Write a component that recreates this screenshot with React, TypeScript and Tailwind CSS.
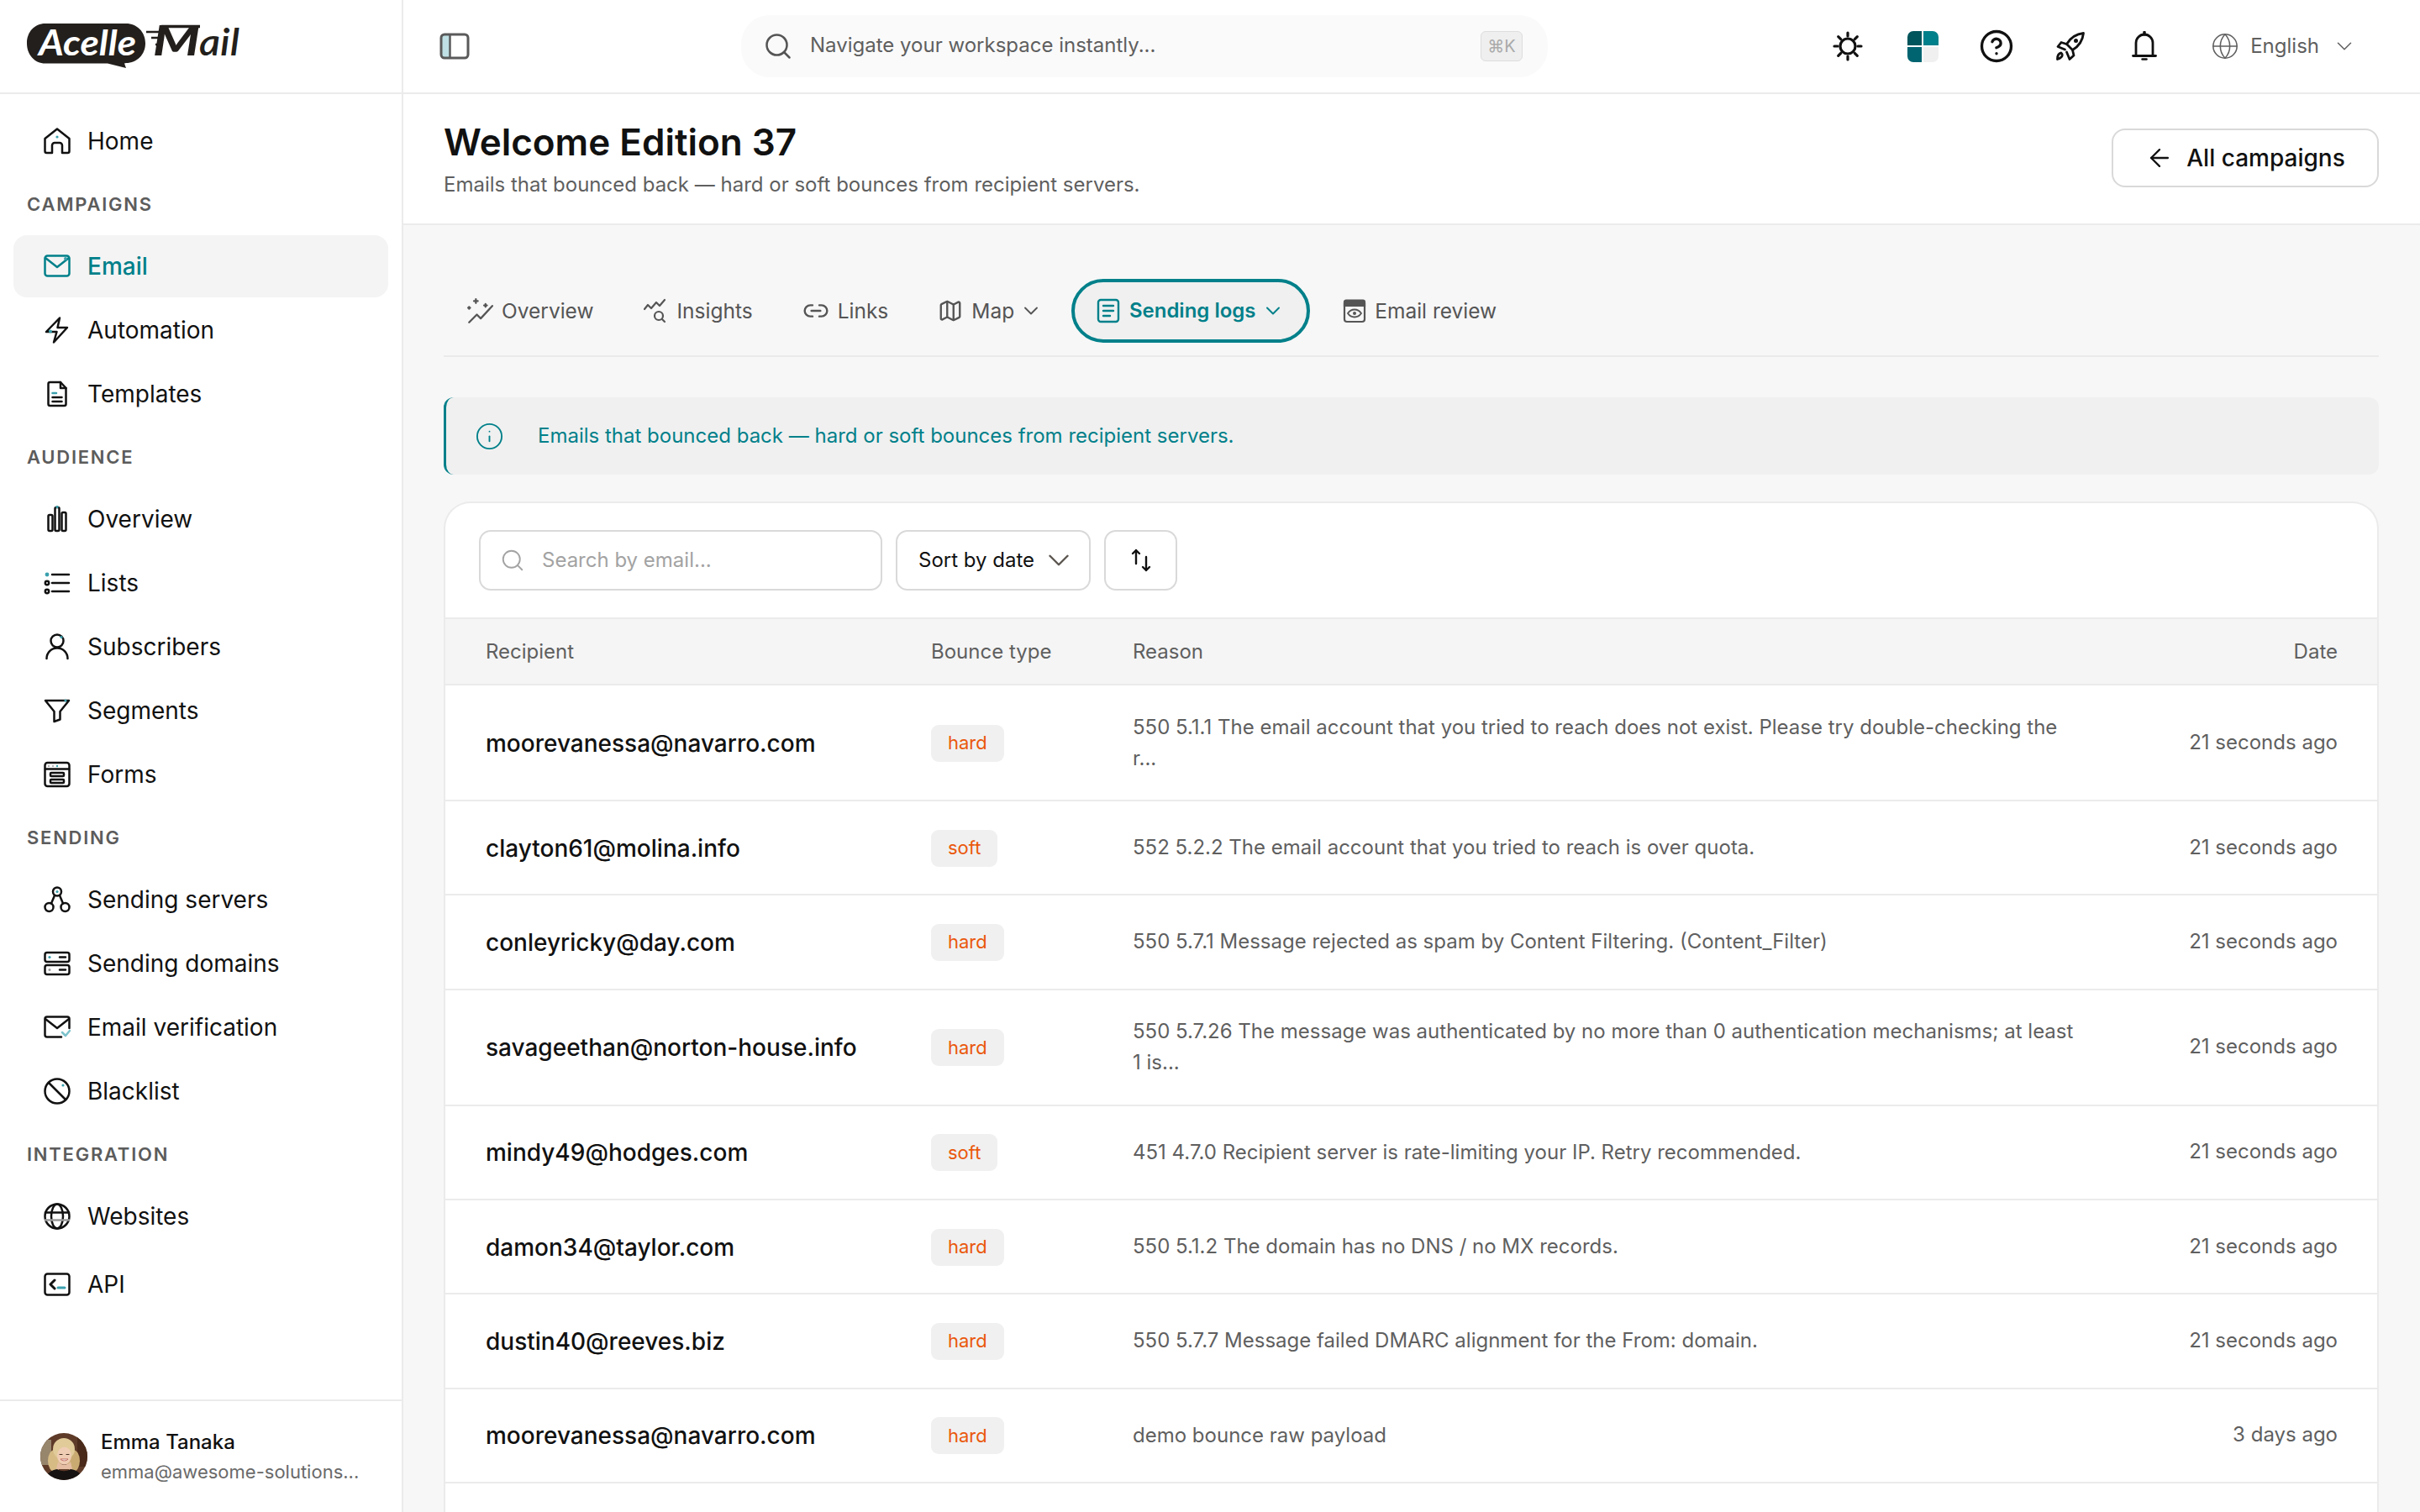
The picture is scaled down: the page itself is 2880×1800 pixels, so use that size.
import { ReactNode } from "react";
import { ArrowLeft, ChevronDown, CircleHelp, Globe, Info, Link2, Map as MapIcon, Search } from "lucide-react";

const TEAL = "#00808a";
const DOT = "#3aa0ad";

function Ico({ children, color = "#111111" }: { children: ReactNode; color?: string }) {
  return (
    <svg viewBox="0 0 32 32" fill="none" stroke={color} strokeWidth={2.5} strokeLinecap="round" strokeLinejoin="round" className="w-8 h-8 shrink-0">
      {children}
    </svg>
  );
}

const Dot = ({ x, y, r = 1.6 }: { x: number; y: number; r?: number }) => <circle cx={x} cy={y} r={r} fill={DOT} stroke="none" />;

const HomeIcon = () => (
  <Ico>
    <path d="M1.5 13 16 1.5 30.5 13v15a2 2 0 0 1-2 2H22V21a3 3 0 0 0-3-3h-6a3 3 0 0 0-3 3v9H3.5a2 2 0 0 1-2-2Z" />
    <Dot x={16} y={11} />
  </Ico>
);
const EmailIcon = () => (
  <Ico color={TEAL}>
    <rect x="1.5" y="3.5" width="29" height="24" rx="3" />
    <path d="M2 6l14 11L30 6" />
    <Dot x={26} y={7} r={2} />
  </Ico>
);
const BoltIcon = () => (
  <Ico>
    <path d="M19 1.500 3 18h12.500L12 30.500 28 13H16.500Z" />
    <Dot x={8} y={17.5} r={2} />
  </Ico>
);
const DocIcon = () => (
  <Ico>
    <path d="M7.500 2H20l6.500 7v19a2 2 0 0 1-2 2H7.500a2 2 0 0 1-2-2V4a2 2 0 0 1 2-2Z" />
    <path d="M20 2v7h6.500M10.500 20h11M10.500 25h11" />
    <path d="M10.500 15h4.500" stroke={DOT} />
  </Ico>
);
const BarsIcon = () => (
  <Ico>
    <rect x="5.5" y="11" width="5" height="19" rx="1.5" />
    <rect x="13.5" y="2" width="5" height="28" rx="1.5" />
    <rect x="21.5" y="8" width="5" height="22" rx="1.5" />
    <Dot x={16} y={1.5} />
  </Ico>
);
const ListIcon = () => (
  <Ico>
    <path d="M10 6h20M10 16h20M10 26h20" />
    <Dot x={4} y={6} r={2.4} />
    <circle cx="4" cy="16" r="2.2" />
    <circle cx="4" cy="26" r="2.2" />
  </Ico>
);
const UserIcon = () => (
  <Ico>
    <circle cx="16" cy="9" r="7.5" />
    <path d="M3.500 30c0-7 5.500-12.500 12.500-12.500S28.500 23 28.500 30" />
    <Dot x={21} y={4.5} />
  </Ico>
);
const FilterIcon = () => (
  <Ico>
    <path d="M2 4h28L19.500 17v9.500L12.500 29V17Z" />
    <Dot x={26} y={4} />
  </Ico>
);
const FormIcon = () => (
  <Ico>
    <rect x="1.5" y="2" width="29" height="28" rx="3" />
    <path d="M2 9.500h28" />
    <rect x="8" y="14" width="16" height="4" rx="1" />
    <rect x="8" y="22" width="16" height="4" rx="1" />
    <circle cx="6" cy="6" r="1" fill="#9a9a9a" stroke="none" />
    <circle cx="11" cy="6" r="1" fill="#9a9a9a" stroke="none" />
    <Dot x={16} y={6} r={1.2} />
  </Ico>
);
const ServersIcon = () => (
  <Ico>
    <circle cx="16" cy="6.5" r="5" />
    <circle cx="6.5" cy="25" r="5" />
    <circle cx="25.5" cy="25" r="5" />
    <path d="M13 11l-4 9.500M19 11l4 9.500" />
    <Dot x={16} y={6.5} />
  </Ico>
);
const DomainIcon = () => (
  <Ico>
    <rect x="1.5" y="3" width="29" height="11" rx="2.5" />
    <rect x="1.5" y="18" width="29" height="11" rx="2.5" />
    <path d="M19 8.500h7M19 23.500h7" />
    <Dot x={7} y={8.5} />
    <circle cx="7" cy="23.5" r="1.5" fill="#9a9a9a" stroke="none" />
  </Ico>
);
const VerifyIcon = () => (
  <Ico>
    <path d="M30.500 17V6a2.500 2.500 0 0 0-2.500-2.500H4A2.500 2.500 0 0 0 1.500 6v19A2.500 2.500 0 0 0 4 27.500h17" />
    <path d="M2 6l14 11L30 6" />
    <path d="M22 22l4 4 5-6" stroke="#7cc2cb" />
  </Ico>
);
const BanIcon = () => (
  <Ico>
    <circle cx="16" cy="16" r="14.5" />
    <path d="M6 6l20 20" />
    <Dot x={23} y={9} />
  </Ico>
);
const GlobeIcon = () => (
  <Ico>
    <circle cx="16" cy="16" r="14.5" />
    <ellipse cx="16" cy="16" rx="7" ry="14.5" />
    <path d="M2 11.500h28" />
    <path d="M2 20.500h28" stroke="#9a9a9a" />
  </Ico>
);
const ApiIcon = () => (
  <Ico>
    <rect x="1.5" y="3.5" width="29" height="25" rx="3" />
    <path d="M13 11l-5 5 5 5" strokeWidth={3} />
    <path d="M17 20h8" stroke={DOT} strokeWidth={3} />
  </Ico>
);

function NavItem({ icon, label, active, className = "" }: { icon: ReactNode; label: string; active?: boolean; className?: string }) {
  return (
    <a className={`flex items-center h-[74px] mb-[2px] rounded-[16px] pl-[36px] gap-[20px] text-[28px] ${active ? "bg-[#f4f4f4] text-[#00808a] font-medium" : "text-[#111111]"} ${className}`}>
      <span className="flex items-center justify-center w-8">{icon}</span>
      {label}
    </a>
  );
}

const NavLabel = ({ children }: { children: string }) => (
  <div className="h-[73px] flex items-center pl-[16px] text-[22px] font-semibold tracking-[0.08em] text-[#5c5c5c]">{children}</div>
);

function Logo() {
  return (
    <svg viewBox="0 -14 290 78" className="w-[290px] h-[78px]">
      <path d="M24 3h96c13 0 23 10 23 23.500S133 50 120 50l-2 .5 2 5.500-22-5.500H24C11 50.500 2 40 2 26.500S11 3 24 3Z" fill="#231f1c" />
      <text x="16" y="41" fontFamily="Lato, sans-serif" fontStyle="italic" fontWeight="700" fontSize="42" fill="#ffffff" textLength="116" lengthAdjust="spacingAndGlyphs">Acelle</text>
      <path d="M144 13h22M150 20h12M155 28h6" stroke="#231f1c" strokeWidth="2.5" />
      <text x="152" y="41" fontFamily="Lato, sans-serif" fontStyle="italic" fontWeight="900" fontSize="50" fill="#231f1c" textLength="56" lengthAdjust="spacingAndGlyphs">M</text>
      <path d="M162 6.500h46" stroke="#231f1c" strokeWidth="3.5" />
      <text x="207" y="41" fontFamily="Lato, sans-serif" fontStyle="italic" fontWeight="600" fontSize="44" fill="#231f1c" textLength="48" lengthAdjust="spacingAndGlyphs">ail</text>
    </svg>
  );
}

function Avatar() {
  return (
    <svg viewBox="0 0 56 56" className="w-[56px] h-[56px] rounded-full shrink-0">
      <rect width="56" height="56" fill="#5e3a28" />
      <rect x="0" y="8" width="13" height="30" fill="#97866c" />
      <rect x="44" y="0" width="12" height="40" fill="#4a2a1a" />
      <ellipse cx="17" cy="33" rx="8" ry="13" fill="#d6bb84" />
      <ellipse cx="39" cy="33" rx="8" ry="13" fill="#c9ab72" />
      <ellipse cx="28" cy="19" rx="13" ry="13" fill="#e0cb99" />
      <ellipse cx="28.5" cy="27" rx="8.5" ry="10.5" fill="#efcdb4" />
      <path d="M21 34c3 5 12 5 15 0l2 9H19Z" fill="#e5bda3" />
      <path d="M5 56c1-8 9-12 15-13 5 3 11 3 16 0 7 1 14 5 15 13Z" fill="#161211" />
      <path d="M24 31c2 2.500 7 2.500 9 0Z" fill="#ffffff" stroke="#b4574f" strokeWidth="0.8" />
      <path d="M23 25.500h3M31 25.500h3" stroke="#4a3426" strokeWidth="1.2" strokeLinecap="round" />
    </svg>
  );
}

function OverviewTabIcon() {
  return (
    <svg viewBox="1 2 27 27" fill="none" stroke="#555555" strokeWidth="2" strokeLinecap="round" strokeLinejoin="round" className="w-[31px] h-[31px]">
      <path d="M3 27l8-8 4 4 12-13" />
      <path d="M10 3v4M8 5h4M3 11v2M2 12h2M20 8v3M18.500 9.500h3" />
    </svg>
  );
}
function InsightsTabIcon() {
  return (
    <svg viewBox="0 0 30 30" fill="none" stroke="#555555" strokeWidth="2.2" strokeLinecap="round" strokeLinejoin="round" className="w-[30px] h-[30px]">
      <path d="M1 13l4-5 4 4 6-7 4 4 6-7" />
      <circle cx="18" cy="21" r="5" />
      <path d="M22 25l3 3" />
    </svg>
  );
}
function LogsTabIcon() {
  return (
    <svg viewBox="0 0 28 30" fill="none" stroke="#00808a" strokeWidth="2.4" strokeLinecap="round" className="w-[28px] h-[30px]">
      <rect x="2" y="2" width="24" height="26" rx="3" />
      <path d="M8 9h12M8 15h12M8 21h8" />
    </svg>
  );
}
function ReviewTabIcon() {
  return (
    <svg viewBox="0 0 28 30" fill="none" stroke="#555555" strokeWidth="2.2" className="w-[28px] h-[30px]">
      <rect x="2" y="3" width="24" height="25" rx="3" />
      <path d="M2 4.500a2 2 0 0 1 2-2h20a2 2 0 0 1 2 2V9H2Z" fill="#555555" />
      <path d="M6 18c4-6 12-6 16 0-4 6-12 6-16 0Z" strokeWidth="1.8" />
      <circle cx="14" cy="18" r="2" fill="#555555" stroke="none" />
    </svg>
  );
}

function PanelToggle() {
  return (
    <svg viewBox="0 0 36 32" className="w-[36px] h-[32px]" fill="none">
      <rect x="2" y="2" width="11" height="28" fill="#bfe0e4" />
      <rect x="2" y="2" width="32" height="28" rx="4" stroke="#5a5a5a" strokeWidth="3" />
      <path d="M12.500 2v28" stroke="#5a5a5a" strokeWidth="2.5" />
    </svg>
  );
}

function PaletteIcon() {
  return (
    <span className="grid grid-cols-2 gap-[2px] w-[37px] h-[37px] rounded-[7px] overflow-hidden">
      <span className="bg-[#00545b]" />
      <span className="bg-[#00808a]" />
      <span className="bg-[#006470]" />
      <span className="bg-[#f0f0f0]" />
    </span>
  );
}

function SunIcon() {
  return (
    <svg viewBox="0 0 36 36" fill="none" stroke="#111111" strokeWidth="3.2" strokeLinecap="round" className="w-[36px] h-[36px] -ml-[2px]">
      <circle cx="18" cy="18" r="9" />
      <path d="M18 2v4M18 30v4M2 18h4M30 18h4M6.700 6.700l3 3M26.300 26.300l3 3M6.700 29.300l3-3M26.300 9.700l3-3" />
    </svg>
  );
}

function RocketIcon() {
  return (
    <svg viewBox="0 0 36 36" fill="none" stroke="#111111" strokeWidth="2.8" strokeLinejoin="round" strokeLinecap="round" className="w-[36px] h-[36px]">
      <path d="M33.500 2.500c-9 1-15.500 5.500-20 13l7 7c7.500-4.500 12-11 13-20Z" />
      <path d="M13.500 15.500 7 13.500l-4 5 8.500 3.500" />
      <path d="M20.500 22.500 22 29l-5 4.500-3.500-8.500" />
      <path d="M2.500 33.500c0-4 1.500-7 4.500-7.500 2 1.500 1.500 4-.5 5.500-1 1-2.500 1.500-4 2Z" />
      <circle cx="24.500" cy="11.500" r="2.500" fill="#111111" stroke="none" />
    </svg>
  );
}

function BellIcon() {
  return (
    <svg viewBox="0 0 30 36" fill="none" stroke="#111111" strokeWidth="2.8" strokeLinecap="round" strokeLinejoin="round" className="w-[30px] h-[36px]">
      <path d="M5 29V14a10 10 0 0 1 20 0v15" />
      <path d="M1.500 29.500h27" />
      <path d="M15 1.500v2.500" strokeWidth="3.5" />
      <path d="M12.500 33.500h5" strokeWidth="2.5" />
    </svg>
  );
}

function SortIcon() {
  return (
    <svg viewBox="0 0 24 28" fill="none" stroke="#111111" strokeWidth="2.4" strokeLinecap="round" strokeLinejoin="round" className="w-[24px] h-[28px]">
      <path d="M6 18V2M2 6l4-4 4 4" />
      <path d="M18 10v16M14 22l4 4 4-4" />
    </svg>
  );
}

const TopIcon = ({ children }: { children: ReactNode }) => <span className="w-[88px] flex justify-center text-[#111111]">{children}</span>;

function Tab({ icon, label, chevron }: { icon: ReactNode; label: string; chevron?: boolean }) {
  return (
    <a className="flex items-center gap-[10px] text-[24.5px] text-[#555555]">
      {icon}
      {label}
      {chevron && <ChevronDown size={28} strokeWidth={1.6} className="-ml-[4px]" />}
    </a>
  );
}

type Bounce = { email: string; type: string; reason: ReactNode; date: string; tall?: boolean };

const rows: Bounce[] = [
  { email: "moorevanessa@navarro.com", type: "hard", reason: "550 5.1.1 The email account that you tried to reach does not exist. Please try double-checking the r...", date: "21 seconds ago", tall: true },
  { email: "clayton61@molina.info", type: "soft", reason: "552 5.2.2 The email account that you tried to reach is over quota.", date: "21 seconds ago" },
  { email: "conleyricky@day.com", type: "hard", reason: "550 5.7.1 Message rejected as spam by Content Filtering. (Content_Filter)", date: "21 seconds ago" },
  { email: "savageethan@norton-house.info", type: "hard", reason: "550 5.7.26 The message was authenticated by no more than 0 authentication mechanisms; at least 1 is...", date: "21 seconds ago", tall: true },
  { email: "mindy49@hodges.com", type: "soft", reason: "451 4.7.0 Recipient server is rate-limiting your IP. Retry recommended.", date: "21 seconds ago" },
  { email: "damon34@taylor.com", type: "hard", reason: "550 5.1.2 The domain has no DNS / no MX records.", date: "21 seconds ago" },
  { email: "dustin40@reeves.biz", type: "hard", reason: "550 5.7.7 Message failed DMARC alignment for the From: domain.", date: "21 seconds ago" },
  { email: "moorevanessa@navarro.com", type: "hard", reason: "demo bounce raw payload", date: "3 days ago" },
];

function Row({ row }: { row: Bounce }) {
  return (
    <div className={`flex items-center pl-[48px] pr-[47px] border-b-2 border-[#ebebeb] ${row.tall ? "h-[138px]" : "h-[112.33px]"}`}>
      <div className="w-[530px] shrink-0 mt-[1px] text-[28px] font-medium text-[#111111]">{row.email}</div>
      <div className="w-[240px] shrink-0 mt-[1px] flex">
        <span className="inline-flex items-center justify-center h-[44px] px-[20px] rounded-[9px] bg-[#f0f0f0] text-[22px] text-[#ea580c]">{row.type}</span>
      </div>
      <div className="w-[1125px] shrink-0 mb-[1px] text-[24px] leading-[37px] text-[#5f5f5f]">{row.reason}</div>
      <div className="ml-auto mb-[1px] text-[24px] text-[#5f5f5f]">{row.date}</div>
    </div>
  );
}

export default function App() {
  return (
    <div className="w-[2880px] h-[1800px] flex overflow-hidden bg-white font-['Inter',sans-serif]">
      <aside className="w-[480px] shrink-0 border-r-2 border-[#ebebeb] flex flex-col">
        <div className="h-[112px] border-b-2 border-[#ebebeb] pl-[30px] pt-[11px]">
          <Logo />
        </div>
        <nav className="flex-1 pt-[19px] pl-[16px] pr-[16px]">
          <NavItem icon={<HomeIcon />} label="Home" />
          <NavLabel>CAMPAIGNS</NavLabel>
          <NavItem icon={<EmailIcon />} label="Email" active />
          <NavItem icon={<BoltIcon />} label="Automation" />
          <NavItem icon={<DocIcon />} label="Templates" />
          <NavLabel>AUDIENCE</NavLabel>
          <NavItem icon={<BarsIcon />} label="Overview" />
          <NavItem icon={<ListIcon />} label="Lists" />
          <NavItem icon={<UserIcon />} label="Subscribers" />
          <NavItem icon={<FilterIcon />} label="Segments" />
          <NavItem icon={<FormIcon />} label="Forms" />
          <NavLabel>SENDING</NavLabel>
          <NavItem icon={<ServersIcon />} label="Sending servers" />
          <NavItem icon={<DomainIcon />} label="Sending domains" />
          <NavItem icon={<VerifyIcon />} label="Email verification" />
          <NavItem icon={<BanIcon />} label="Blacklist" />
          <NavLabel>INTEGRATION</NavLabel>
          <NavItem icon={<GlobeIcon />} label="Websites" />
          <NavItem icon={<ApiIcon />} label="API" className="mt-[7px]" />
        </nav>
        <div className="h-[134px] border-t-2 border-[#ebebeb] flex items-center pl-[48px] gap-[16px]">
          <Avatar />
          <div>
            <div className="text-[24px] leading-[35px] text-[#111111] font-medium">Emma Tanaka</div>
            <div className="text-[22px] leading-[36px] text-[#6a6a6a]">emma@awesome-solutions...</div>
          </div>
        </div>
      </aside>

      <main className="flex-1 min-w-0 flex flex-col">
        <header className="h-[112px] shrink-0 border-b-2 border-[#ebebeb] flex items-center pl-[43px] pr-[75px]">
          <PanelToggle />
          <div className="ml-[323px] w-[960px] h-[74px] rounded-[34px] bg-[#fafafa] flex items-center pl-[26px] pr-[30px]">
            <Search size={36} strokeWidth={1.7} className="text-[#555555]" />
            <span className="ml-[20px] -mt-[2px] text-[24px] text-[#5f5f5f]">Navigate your workspace instantly...</span>
            <span className="ml-auto h-[36px] w-[50px] flex items-center justify-center rounded-[6px] border border-[#dddddd] bg-[#efefef] text-[20px] text-[#aaaaaa]">⌘K</span>
          </div>
          <div className="ml-auto flex items-center">
            <TopIcon><SunIcon /></TopIcon>
            <TopIcon><PaletteIcon /></TopIcon>
            <TopIcon><CircleHelp size={42} strokeWidth={1.9} /></TopIcon>
            <TopIcon><RocketIcon /></TopIcon>
            <TopIcon><BellIcon /></TopIcon>
            <div className="ml-[35px] flex items-center text-[#5f5f5f]">
              <Globe size={34} strokeWidth={1.1} />
              <span className="ml-[13px] text-[24px]">English</span>
              <ChevronDown size={30} strokeWidth={1.2} className="ml-[15px]" />
            </div>
          </div>
        </header>

        <section className="h-[156px] shrink-0 border-b-2 border-[#ebebeb] flex items-center justify-between pl-[48px] pr-[49px]">
          <div>
            <h1 className="text-[44px] leading-[56px] font-semibold text-[#111111]">Welcome Edition 37</h1>
            <p className="mt-[5px] text-[24px] leading-[36px] text-[#5f5f5f]">Emails that bounced back — hard or soft bounces from recipient servers.</p>
          </div>
          <button className="w-[318px] h-[70px] mb-[2px] rounded-[16px] border-2 border-[#d9d9d9] flex items-center justify-center gap-[15px] text-[28px] font-medium text-[#111111]">
            <ArrowLeft size={34} strokeWidth={1.6} />
            All campaigns
          </button>
        </section>

        <div className="flex-1 min-h-0 bg-[#f7f7f7] pl-[48px] pr-[49px] pt-[65px]">
          <div className="flex items-center h-[92px] pb-[16px] border-b-2 border-[#eaeaea] pl-[28px]">
            <Tab icon={<OverviewTabIcon />} label="Overview" />
            <div className="w-[59px]" />
            <Tab icon={<InsightsTabIcon />} label="Insights" />
            <div className="w-[59px]" />
            <Tab icon={<Link2 size={32} strokeWidth={1.8} />} label="Links" />
            <div className="w-[59px]" />
            <Tab icon={<MapIcon size={30} strokeWidth={1.9} />} label="Map" chevron />
            <a className="ml-[34px] h-[76px] w-[284px] rounded-[38px] border-4 border-[#00808a] bg-[#f0f0f0] flex items-center justify-center gap-[11px] text-[24px] font-semibold text-[#00808a]">
              <LogsTabIcon />
              Sending logs
              <ChevronDown size={28} strokeWidth={1.7} className="-ml-[4px]" />
            </a>
            <div className="w-[39px]" />
            <Tab icon={<ReviewTabIcon />} label="Email review" />
          </div>

          <div className="mt-[48px] h-[92px] rounded-[12px] bg-[#f0f0f0] border-l-[3px] border-[#00808a] flex items-center pl-[34px] gap-[40px] text-[24px] text-[#00808a]">
            <Info size={35} strokeWidth={1.3} />
            Emails that bounced back — hard or soft bounces from recipient servers.
          </div>

          <div className="mt-[32px] bg-white border-2 border-b-0 border-[#ebebeb] rounded-t-[32px]">
            <div className="h-[136px] flex items-start gap-[16px] pt-[32px] pl-[40px]">
              <div className="w-[480px] h-[72px] rounded-[14px] border-2 border-[#d9d9d9] flex items-center pl-[23px] gap-[20px] text-[24px] text-[#a3a3a3]">
                <Search size={30} strokeWidth={1.5} />
                Search by email...
              </div>
              <div className="w-[232px] h-[72px] rounded-[14px] border-2 border-[#d9d9d9] flex items-center pl-[25px] text-[24px] text-[#111111]">
                Sort by date
                <ChevronDown size={42} strokeWidth={1.4} className="ml-[8px] text-[#5c5650]" />
              </div>
              <div className="w-[87px] h-[72px] rounded-[14px] border-2 border-[#d9d9d9] flex items-center justify-center">
                <SortIcon />
              </div>
            </div>
            <div className="h-[81px] flex items-center bg-[#f5f5f5] border-y-2 border-[#ebebeb] pl-[48px] pr-[47px] text-[24px] text-[#5f5f5f]">
              <div className="w-[530px]">Recipient</div>
              <div className="w-[240px]">Bounce type</div>
              <div>Reason</div>
              <div className="ml-auto">Date</div>
            </div>
            {rows.map((row, i) => (
              <Row key={i} row={row} />
            ))}
            <div className="h-[120px]" />
          </div>
        </div>
      </main>
    </div>
  );
}
